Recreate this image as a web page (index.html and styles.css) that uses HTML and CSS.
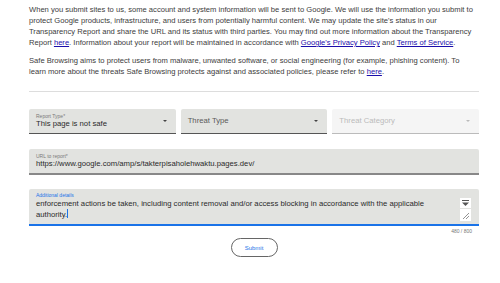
FILE: index.html
```html
<!DOCTYPE html>
<html lang="en">
<head>
    <meta charset="UTF-8">
    <meta name="viewport" content="width=device-width, initial-scale=1.0">
    <title>Report a site</title>
    <link rel="stylesheet" href="styles.css">
</head>
<body>
<div class="page">
    <p class="intro">When you submit sites to us, some account and system information will be sent to Google. We will use the information you submit to protect Google products, infrastructure, and users from potentially harmful content. We may update the site's status in our Transparency Report and share the URL and its status with third parties. You may find out more information about the Transparency Report <a href="#">here</a>. Information about your report will be maintained in accordance with <a href="#">Google's Privacy Policy</a> and <a href="#">Terms of Service</a>.</p>
    <p class="intro">Safe Browsing aims to protect users from malware, unwanted software, or social engineering (for example, phishing content). To learn more about the threats Safe Browsing protects against and associated policies, please refer to <a href="#">here</a>.</p>
    <hr class="divider">

    <div class="select-row">
        <div class="field select">
            <div class="field-text">
                <span class="label">Report Type*</span>
                <span class="value">This page is not safe</span>
            </div>
            <span class="arrow"></span>
        </div>
        <div class="field select">
            <div class="field-text">
                <span class="value placeholder">Threat Type</span>
            </div>
            <span class="arrow"></span>
        </div>
        <div class="field select disabled">
            <div class="field-text">
                <span class="value placeholder">Threat Category</span>
            </div>
            <span class="arrow"></span>
        </div>
    </div>

    <div class="field url">
        <div class="field-text">
            <span class="label">URL to report*</span>
            <span class="value">https://www.google.com/amp/s/takterpisaholehwaktu.pages.dev/</span>
        </div>
    </div>

    <div class="field details">
        <div class="field-text">
            <span class="label focus">Additional details</span>
            <span class="value">enforcement actions be taken, including content removal and/or access blocking in accordance with the applicable authority.<span class="caret"></span></span>
        </div>
        <div class="scroll-bits">
            <svg class="scroll-down" width="11" height="10" viewBox="0 0 11 10">
                <rect x="0" y="0" width="11" height="10" fill="#fff"/>
                <rect x="2" y="2" width="7" height="1" fill="#555"/>
                <path d="M2 4.5 H9 L5.5 8 Z" fill="#555"/>
            </svg>
            <svg class="grip" width="11" height="12" viewBox="0 0 11 12">
                <rect x="0" y="0" width="11" height="12" fill="#fff"/>
                <path d="M3 10 L9 4 M6 10 L9 7" stroke="#777" stroke-width="0.8"/>
            </svg>
        </div>
    </div>
    <div class="counter">480 / 800</div>

    <div class="actions">
        <button class="submit">Submit</button>
    </div>
</div>
</body>
</html>
```

FILE: styles.css
```css
body {
    margin: 0;
    background: #fff;
    font-family: "Liberation Sans", Arial, sans-serif;
}
.page {
    padding: 4px 21px 0 29px;
}
.intro {
    margin: 0 4px 7px 0;
    font-size: 7.6px;
    line-height: 11px;
    color: #3c3c3c;
}
.intro a {
    color: #1a0dab;
}
.divider {
    border: none;
    border-top: 1px solid #ddd;
    margin: 14px 0 17px 0;
}
.select-row {
    display: flex;
    gap: 5px;
}
.field {
    position: relative;
    background: #e2e3e0;
    border-bottom: 1px solid #555;
    border-radius: 2px 2px 0 0;
    display: flex;
    align-items: center;
}
.select {
    flex: 1;
    height: 24px;
}
.field-text {
    flex: 1;
    display: flex;
    flex-direction: column;
    padding-left: 7px;
    min-width: 0;
}
.label {
    font-size: 5px;
    line-height: 6px;
    color: #7a7a7a;
}
.label.focus {
    color: #1a73e8;
}
.value {
    font-size: 7.7px;
    line-height: 10px;
    color: #2a2a2a;
    white-space: nowrap;
}
.placeholder {
    color: #5a5a5a;
}
.arrow {
    width: 0;
    height: 0;
    border-left: 2.5px solid transparent;
    border-right: 2.5px solid transparent;
    border-top: 2.5px solid #444;
    margin-right: 9px;
}
.disabled {
    background: #f5f5f5;
    border-bottom-color: #bbb;
}
.disabled .placeholder {
    color: #bbb;
}
.disabled .arrow {
    border-top-color: #bbb;
}
.url {
    margin-top: 15px;
    height: 24px;
    border-bottom: 2px solid #888;
}
.details {
    margin-top: 14px;
    height: 35px;
    border-bottom: 2px solid #1a73e8;
    align-items: flex-start;
}
.details .field-text {
    padding-top: 3px;
    padding-right: 22px;
}
.details .value {
    white-space: normal;
    line-height: 11px;
}
.caret {
    display: inline-block;
    width: 1px;
    height: 9px;
    background: #1a73e8;
    vertical-align: -1px;
}
.scroll-bits {
    position: absolute;
    right: 8px;
    top: 9px;
    display: flex;
    flex-direction: column;
    gap: 1px;
}
.scroll-bits svg {
    display: block;
}
.counter {
    text-align: right;
    font-size: 5px;
    color: #777;
    padding: 2px 7px 0 0;
}
.actions {
    display: flex;
    justify-content: center;
    margin-top: 4px;
}
.submit {
    font-family: "Liberation Sans", Arial, sans-serif;
    font-size: 6px;
    color: #1a73e8;
    background: #fff;
    border: 1px solid #666;
    border-radius: 10px;
    width: 47px;
    height: 19px;
    padding: 0;
}
```
